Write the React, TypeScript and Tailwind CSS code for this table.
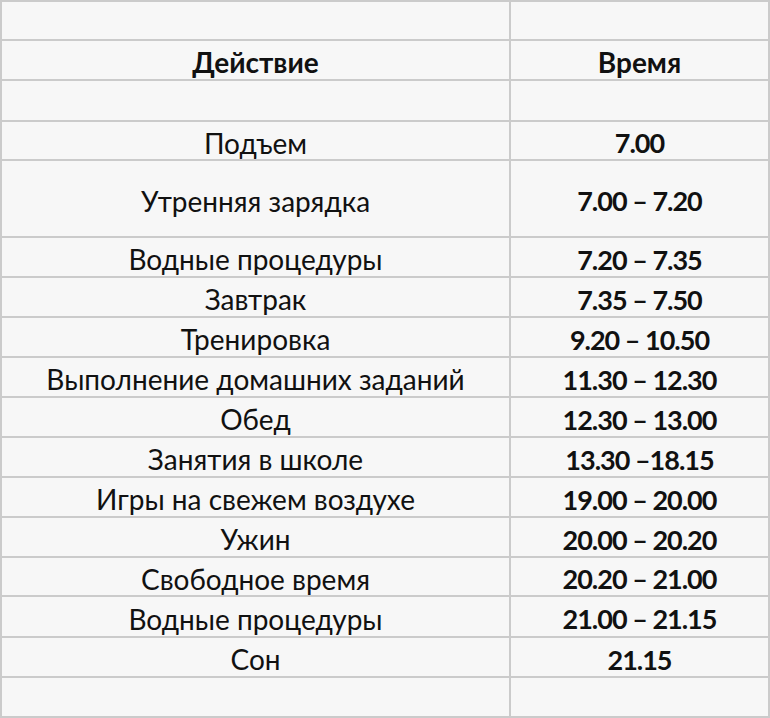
const rows: { action: string; time: string; h: string }[] = [
  { action: "", time: "", h: "h-[39px]" },
  { action: "Действие", time: "Время", h: "h-[40px]" },
  { action: "", time: "", h: "h-[41px]" },
  { action: "Подъем", time: "7.00", h: "h-[39px]" },
  { action: "Утренняя зарядка", time: "7.00 – 7.20", h: "h-[77px]" },
  { action: "Водные процедуры", time: "7.20 – 7.35", h: "h-[40px]" },
  { action: "Завтрак", time: "7.35 – 7.50", h: "h-[40px]" },
  { action: "Тренировка", time: "9.20 – 10.50", h: "h-[40px]" },
  { action: "Выполнение домашних заданий", time: "11.30 – 12.30", h: "h-[40px]" },
  { action: "Обед", time: "12.30 – 13.00", h: "h-[40px]" },
  { action: "Занятия в школе", time: "13.30 –18.15", h: "h-[40px]" },
  { action: "Игры на свежем воздухе", time: "19.00 – 20.00", h: "h-[40px]" },
  { action: "Ужин", time: "20.00 – 20.20", h: "h-[40px]" },
  { action: "Свободное время", time: "20.20 – 21.00", h: "h-[39px]" },
  { action: "Водные процедуры", time: "21.00 – 21.15", h: "h-[41px]" },
  { action: "Сон", time: "21.15", h: "h-[40px]" },
  { action: "", time: "", h: "h-[40px]" },
];

export default function App() {
  return (
    <div className="w-[770px] h-[718px] overflow-hidden bg-[#f7f7f7] border-t-2 border-l-2 border-r-2 border-[#cbcbcb] text-[#111] text-[28px] leading-none font-['Lato',sans-serif]">
      {rows.map((r, i) => (
        <div key={i} className={`grid grid-cols-[509px_1fr] border-b-2 border-[#cbcbcb] ${r.h}`}>
          <div className={`flex items-center justify-center pt-[4px] border-r-2 border-[#cbcbcb] ${i === 1 ? "font-bold" : ""}`}>
            {r.action}
          </div>
          <div
            className={`flex items-center justify-center pt-[4px] font-bold ${
              i === 1 ? "" : "text-[27px] tracking-[-1px]"
            }`}
          >
            {r.time}
          </div>
        </div>
      ))}
    </div>
  );
}
